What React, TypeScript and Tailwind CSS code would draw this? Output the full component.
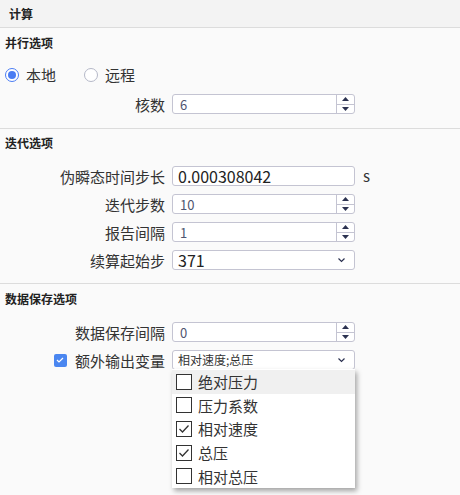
import React from "react";

const font = { fontFamily: '"Noto Sans CJK SC", "Noto Sans", sans-serif' };

function Spinner() {
  return (
    <div className="flex flex-col w-[18px] h-full border-l border-[#c4c4d2]">
      <div className="flex-1 flex items-center justify-center border-b border-[#c4c4d2]">
        <svg width="7" height="4" viewBox="0 0 7 4"><path d="M3.5 0 L7 4 L0 4 Z" fill="#2b3150" /></svg>
      </div>
      <div className="flex-1 flex items-center justify-center">
        <svg width="7" height="4" viewBox="0 0 7 4"><path d="M0 0 L7 0 L3.5 4 Z" fill="#2b3150" /></svg>
      </div>
    </div>
  );
}

function NumInput({ value }: { value: string }) {
  return (
    <div className="flex items-stretch w-[183px] h-[20px] bg-white border border-[#c4c4d2] rounded-[3px]">
      <div className="flex-1 flex items-center pl-[7px] text-[13px] text-[#4f5570] leading-none">{value}</div>
      <Spinner />
    </div>
  );
}

function Chevron() {
  return (
    <svg width="9" height="6" viewBox="0 0 9 6" className="mr-[8px]">
      <path d="M1.5 1.5 L4.5 4.5 L7.5 1.5" fill="none" stroke="#2b3150" strokeWidth="1.2" />
    </svg>
  );
}

function Row({ label, children, left }: { label: string; children: React.ReactNode; left?: React.ReactNode }) {
  return (
    <div className="flex items-center h-[20px]">
      <div className="w-[165px] flex items-center justify-end text-[15px] text-[#333] leading-none">
        {left}
        <span>{label}</span>
      </div>
      <div className="ml-[7px] flex items-center">{children}</div>
    </div>
  );
}

function Title({ children }: { children: React.ReactNode }) {
  return <div className="h-[16px] flex items-center pl-[5px] text-[12px] font-bold text-[#222] leading-none">{children}</div>;
}

function Box({ checked }: { checked?: boolean }) {
  return (
    <div className="w-[16px] h-[16px] border border-[#333] bg-white flex items-center justify-center">
      {checked && (
        <svg width="12" height="10" viewBox="0 0 12 10">
          <path d="M1.5 5 L4.5 8 L10.5 1.5" fill="none" stroke="#333" strokeWidth="1.3" />
        </svg>
      )}
    </div>
  );
}

const items = [
  { t: "绝对压力", c: false, h: true },
  { t: "压力系数", c: false },
  { t: "相对速度", c: true },
  { t: "总压", c: true },
  { t: "相对总压", c: false },
];

export default function App() {
  return (
    <div style={font} className="w-[460px] h-[495px] bg-[#fafafa] overflow-hidden relative">
      <div className="h-[28px] bg-[#f3f3f3] border-b border-[#dcdcdc] pl-[9px] flex items-center text-[12px] font-bold text-[#222]">计算</div>

      <div className="pt-[7px] pb-[14px] border-b border-[#dcdcdc]">
        <Title>并行选项</Title>
        <div className="mt-[14px] h-[20px] flex items-center pl-[5px] text-[15px] text-[#333]">
          <div className="w-[14px] h-[14px] rounded-full border border-[#4a7cf3] flex items-center justify-center bg-white">
            <div className="w-[8px] h-[8px] rounded-full bg-[#4a7cf3]" />
          </div>
          <span className="ml-[7px]">本地</span>
          <div className="ml-[28px] w-[14px] h-[14px] rounded-full border border-[#b5b8c8] bg-white" />
          <span className="ml-[7px]">远程</span>
        </div>
        <div className="mt-[9px]">
          <Row label="核数"><NumInput value="6" /></Row>
        </div>
      </div>

      <div className="pt-[6px] pb-[13px] border-b border-[#dcdcdc]">
        <Title>迭代选项</Title>
        <div className="mt-[15px] flex flex-col gap-[8px]">
          <Row label="伪瞬态时间步长">
            <div className="w-[183px] h-[20px] bg-white border border-[#c4c4d2] rounded-[3px] flex items-center pl-[5px] text-[16px] text-[#222] leading-none">0.000308042</div>
            <span className="ml-[8px] text-[15px] text-[#333]">s</span>
          </Row>
          <Row label="迭代步数"><NumInput value="10" /></Row>
          <Row label="报告间隔"><NumInput value="1" /></Row>
          <Row label="续算起始步">
            <div className="w-[183px] h-[20px] bg-white border border-[#c4c4d2] rounded-[3px] flex items-center justify-between pl-[5px] text-[16px] text-[#222] leading-none">
              <span>371</span>
              <Chevron />
            </div>
          </Row>
        </div>
      </div>

      <div className="pt-[7px]">
        <Title>数据保存选项</Title>
        <div className="mt-[15px] flex flex-col gap-[8px]">
          <Row label="数据保存间隔"><NumInput value="0" /></Row>
          <Row
            label="额外输出变量"
            left={
              <div className="mr-[8px] w-[13px] h-[13px] rounded-[2px] bg-[#4a86f0] flex items-center justify-center">
                <svg width="8" height="6" viewBox="0 0 8 6"><path d="M1 3 L3 5 L7 1" fill="none" stroke="#fff" strokeWidth="1.2" /></svg>
              </div>
            }
          >
            <div className="relative">
              <div className="w-[183px] h-[20px] bg-white border border-[#c4c4d2] rounded-[3px] flex items-center justify-between pl-[5px] text-[12px] text-[#333] leading-none">
                <span>相对速度;总压</span>
                <Chevron />
              </div>
              <div className="absolute left-0 top-[19px] w-[183px] bg-white shadow-[2px_3px_5px_rgba(0,0,0,0.35)] pt-[1px] z-10">
                {items.map((it) => (
                  <div key={it.t} className={`h-[23.6px] flex items-center pl-[4px] ${it.h ? "bg-[#f0f0f0]" : ""}`}>
                    <Box checked={it.c} />
                    <span className="ml-[6px] text-[15px] text-[#333] leading-none">{it.t}</span>
                  </div>
                ))}
              </div>
            </div>
          </Row>
        </div>
      </div>
    </div>
  );
}
